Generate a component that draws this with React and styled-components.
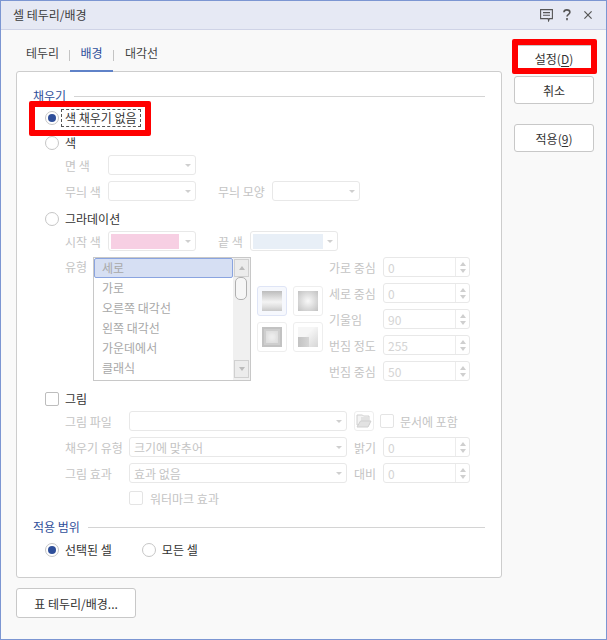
import React from "react";
import styled, { createGlobalStyle } from "styled-components";

const GlobalStyle = createGlobalStyle`
  html, body {
    margin: 0;
    padding: 0;
    background: #f9f9f9;
  }
  body {
    font-family: "Noto Sans CJK KR", "Noto Sans", sans-serif;
    font-size: 12px;
    color: #333;
  }
`;

const muted = "#c4c4c4";

const Window = styled.div`
  box-sizing: border-box;
  width: 607px;
  height: 640px;
  display: flex;
  flex-direction: column;
  border: 1px solid #7c96d2;
  background: #f9f9f9;
  overflow: hidden;
`;

const TitleBar = styled.div`
  box-sizing: border-box;
  height: 29px;
  flex: none;
  display: flex;
  align-items: center;
  justify-content: space-between;
  padding: 0 14px 1px 12px;
  background: #e6e9f4;
  border-bottom: 1px solid #cfd3e6;
  color: #3c3c3c;
`;

const TitleIcons = styled.div`
  display: flex;
  align-items: center;
  gap: 10px;
`;

const Body = styled.div`
  flex: 1;
  display: flex;
  align-items: flex-start;
  padding-left: 15px;
`;

const MainColumn = styled.div`
  width: 486px;
  flex: none;
`;

const Tabs = styled.div`
  height: 42px;
  display: flex;
  align-items: flex-end;
  margin-bottom: -1px;
  position: relative;
`;

const Tab = styled.div`
  box-sizing: border-box;
  width: ${(p) => p.$w}px;
  height: 31px;
  padding-bottom: 7px;
  display: flex;
  align-items: center;
  justify-content: center;
  color: ${(p) => (p.$active ? "#2f4f9a" : "#444")};
  border-bottom: 2px solid ${(p) => (p.$active ? "#5f82c8" : "transparent")};
`;

const TabDivider = styled.div`
  width: 1px;
  height: 11px;
  background: #c4c4c4;
  align-self: flex-end;
  margin-bottom: 11px;
`;

const Panel = styled.div`
  box-sizing: border-box;
  height: 507px;
  padding: 16px 16px 0;
  background: #fff;
  border: 1px solid #cdcdcd;
  border-radius: 3px;
`;

const Heading = styled.div`
  height: 16px;
  margin-top: ${(p) => p.$mt || 0}px;
  display: flex;
  align-items: center;
  gap: 8px;
  color: #2f4f9a;
  line-height: 16px;

  &::after {
    content: "";
    flex: 1;
    height: 1px;
    background: #d4d4d4;
  }
`;

const Row = styled.div`
  height: 20px;
  margin-top: ${(p) => p.$mt || 0}px;
  padding-left: ${(p) => p.$indent || 0}px;
  display: flex;
  align-items: center;
`;

const Label = styled.span`
  flex: none;
  width: ${(p) => (p.$w ? `${p.$w}px` : "auto")};
  margin-left: ${(p) => p.$ml || 0}px;
  color: ${muted};
  white-space: nowrap;
`;

const TypeLabel = styled(Label)`
  line-height: 20px;
`;

const RadioCircle = styled.span`
  box-sizing: border-box;
  flex: none;
  width: 14px;
  height: 14px;
  border-radius: 50%;
  border: 1px solid #c6c6c6;
  background: #fff;
  display: flex;
  align-items: center;
  justify-content: center;

  &::after {
    content: "";
    display: ${(p) => (p.$on ? "block" : "none")};
    width: 8px;
    height: 8px;
    border-radius: 50%;
    background: #2f4f9a;
  }
`;

const Choice = styled.span`
  margin-left: ${(p) => (p.$focus ? 2 : 6)}px;
  margin-right: ${(p) => p.$mr || 0}px;
  color: #333;
  white-space: nowrap;
  padding: ${(p) => (p.$focus ? "0 3px" : "0")};
  border: ${(p) => (p.$focus ? "1px dashed #555" : "0")};
  line-height: ${(p) => (p.$focus ? "16px" : "20px")};
`;

const CheckBox = styled.span`
  box-sizing: border-box;
  flex: none;
  width: 14px;
  height: 14px;
  border-radius: 2px;
  border: 1px solid ${(p) => (p.$dim ? "#e4e4e4" : "#bdbdbd")};
  background: #fff;
  margin-left: ${(p) => p.$ml || 0}px;
`;

const SelectBox = styled.div`
  box-sizing: border-box;
  flex: none;
  width: ${(p) => p.$w}px;
  height: 20px;
  margin-left: ${(p) => p.$ml || 0}px;
  border: 1px solid #e8e8e8;
  border-radius: 3px;
  background: #fff;
  display: flex;
  align-items: center;
  padding: 2px 0 2px 4px;
  color: ${muted};
  white-space: nowrap;

  &::after {
    content: "";
    margin-left: auto;
    margin-right: 4px;
    border-left: 3px solid transparent;
    border-right: 3px solid transparent;
    border-top: 3px solid #cfcfcf;
  }
`;

const Swatch = styled.span`
  width: ${(p) => p.$w}px;
  height: 15px;
  margin-left: -2px;
  background: ${(p) => p.$color};
`;

const SpinBox = styled.div`
  box-sizing: border-box;
  flex: none;
  width: 87px;
  height: 20px;
  margin-left: ${(p) => p.$ml || 0}px;
  border: 1px solid #e8e8e8;
  border-radius: 3px;
  background: #fff;
  display: flex;
  align-items: center;
  color: #d4d4d4;
  padding-left: 4px;
`;

const SpinArrows = styled.div`
  margin-left: auto;
  box-sizing: border-box;
  width: 14px;
  height: 18px;
  border-left: 1px solid #ececec;
  display: flex;
  flex-direction: column;
  align-items: center;
  justify-content: space-around;
  padding: 2px 0;
`;

const Arrow = styled.span`
  border-left: 3px solid transparent;
  border-right: 3px solid transparent;
  border-${(p) => (p.$up ? "bottom" : "top")}: 4px solid ${(p) => p.$color || "#cfcfcf"};
`;

const GradientBlock = styled.div`
  display: flex;
  align-items: flex-start;
  margin-top: 6px;
  padding-left: 32px;
`;

const ListBox = styled.div`
  box-sizing: border-box;
  flex: none;
  width: 158px;
  height: 124px;
  display: flex;
  border: 1px solid #c8c8c8;
  background: #fff;
`;

const ListItems = styled.div`
  flex: 1;
  display: flex;
  flex-direction: column;
`;

const ListItem = styled.div`
  box-sizing: border-box;
  height: 20px;
  flex: none;
  padding-left: 7px;
  line-height: 17px;
  color: #a8a8a8;
  border-radius: 2px;
  border: 1px solid ${(p) => (p.$selected ? "#8aa4e0" : "transparent")};
  background: ${(p) => (p.$selected ? "#d6dff3" : "transparent")};
`;

const ScrollBar = styled.div`
  flex: none;
  width: 17px;
  padding: 1px 1px 2px 1px;
  box-sizing: border-box;
  background: #f0f0f0;
  display: flex;
  flex-direction: column;
  align-items: stretch;
`;

const ScrollButton = styled.div`
  height: 16px;
  flex: none;
  margin-top: ${(p) => (p.$end ? "auto" : "0")};
  border: 1px solid #d0d0d0;
  background: #ececec;
  display: flex;
  align-items: center;
  justify-content: center;
`;

const ScrollThumb = styled.div`
  box-sizing: border-box;
  height: 23px;
  width: 12px;
  margin: 0 0 0 1px;
  border: 1px solid #b0b0b0;
  border-radius: 5px;
  background: #f6f6f6;
`;

const PresetGrid = styled.div`
  flex: none;
  display: grid;
  grid-template-columns: 30px 30px;
  grid-auto-rows: 30px;
  gap: 6px;
  margin: 29px 0 0 6px;
`;

const Preset = styled.div`
  box-sizing: border-box;
  display: flex;
  align-items: center;
  justify-content: center;
  border: 1px solid ${(p) => (p.$active ? "#dfe5f6" : "#eeeeee")};
  border-radius: 3px;
  background: ${(p) => (p.$active ? "#f6f8fd" : "#fff")};
`;

const PresetFill = styled.div`
  width: 20px;
  height: 20px;
  background: ${(p) => p.$fill};
  box-shadow: ${(p) => p.$shade || "none"};
`;

const FileButton = styled(Preset)`
  width: 20px;
  height: 20px;
  margin-left: 7px;
  flex: none;
`;

const SpinColumn = styled.div`
  display: flex;
  flex-direction: column;
  gap: 6px;
  margin-left: 6px;
`;

const SideColumn = styled.div`
  flex: none;
  width: 80px;
  margin-left: 12px;
  padding-top: 15px;
  display: flex;
  flex-direction: column;
`;

const Button = styled.div`
  box-sizing: border-box;
  width: ${(p) => p.$w || 80}px;
  height: ${(p) => p.$h || 28}px;
  margin-top: ${(p) => p.$mt || 0}px;
  display: flex;
  align-items: center;
  justify-content: center;
  border: 1px solid #c8c8c8;
  border-radius: 3px;
  background: #fff;
  color: #333;
  position: relative;
`;

const Key = styled.span`
  text-decoration: underline;
  text-underline-offset: 2px;
`;

const Highlight = styled.div`
  position: absolute;
  left: ${(p) => p.$x}px;
  top: ${(p) => p.$y}px;
  width: ${(p) => p.$w}px;
  height: ${(p) => p.$h}px;
  box-sizing: border-box;
  border: 6px solid #ff0000;
  border-radius: 2px;
  pointer-events: none;
`;

const FootBar = styled.div`
  margin-top: 10px;
`;

function Select({ w, ml, children }) {
  return (
    <SelectBox $w={w} $ml={ml}>
      {children}
    </SelectBox>
  );
}

function Spin({ value, ml }) {
  return (
    <SpinBox $ml={ml}>
      {value}
      <SpinArrows>
        <Arrow $up />
        <Arrow />
      </SpinArrows>
    </SpinBox>
  );
}

const listItems = ["세로", "가로", "오른쪽 대각선", "왼쪽 대각선", "가운데에서", "클래식"];

const presets = [
  {
    fill: "linear-gradient(#bcbcbc, #d8d8d8 28%, #f4f4f4 55%, #dedede 80%, #c8c8c8)",
    active: true,
  },
  { fill: "radial-gradient(circle, #f6f6f6 5%, #dadada 55%, #c4c4c4 95%)" },
  {
    fill: "#f0f0f0",
    shade: "inset 0 0 0 2px #c2c2c2, inset 0 0 0 4px #cecece, inset 0 0 4px 6px #dcdcdc",
  },
  {
    fill: "linear-gradient(to right, #c2c2c2, #d6d6d6) 0 100% / 55% 50% no-repeat, linear-gradient(135deg, #f6f6f6 40%, #d6d6d6)",
  },
];

const spinRows = [
  ["가로 중심", "0"],
  ["세로 중심", "0"],
  ["기울임", "90"],
  ["번짐 정도", "255"],
  ["번짐 중심", "50"],
];

export default function App() {
  return (
    <>
      <GlobalStyle />
      <Window>
        <TitleBar>
          <span>셀 테두리/배경</span>
          <TitleIcons>
            <svg width="13" height="14" viewBox="0 0 13 14" fill="none" stroke="#555" strokeWidth="1.1">
              <path d="M.6 1.6h11.8v9H9.4L8.6 12.8l-.5-2.2H.6z" />
              <path d="M3 4.6h7M3 7.2h7" />
            </svg>
            <svg width="8" height="12" viewBox="0 0 8 12" fill="none" stroke="#555" strokeWidth="1.6">
              <path d="M.9 3.2C1 1.7 2.2.9 3.8.9 5.6.9 6.9 1.9 6.9 3.3 6.9 5.3 4 5.4 4 7.6" />
              <path d="M4 9v2.2" />
            </svg>
            <svg width="8" height="8" viewBox="0 0 8 8" fill="none" stroke="#555" strokeWidth="1.2" style={{ marginLeft: 3 }}>
              <path d="M.4.4l7.2 7.2M7.6.4L.4 7.6" />
            </svg>
          </TitleIcons>
        </TitleBar>
        <Body>
          <MainColumn>
            <Tabs>
              <Tab $w={53}>테두리</Tab>
              <TabDivider />
              <Tab $active $w={43}>
                배경
              </Tab>
              <TabDivider />
              <Tab $w={55}>대각선</Tab>
            </Tabs>
            <Panel>
              <Heading>채우기</Heading>
              <Row $mt={4} $indent={12}>
                <RadioCircle $on />
                <Choice $focus>색 채우기 없음</Choice>
              </Row>
              <Row $mt={5} $indent={12}>
                <RadioCircle />
                <Choice>색</Choice>
              </Row>
              <Row $mt={2} $indent={32}>
                <Label $w={43}>면 색</Label>
                <Select w={88} />
              </Row>
              <Row $mt={6} $indent={32}>
                <Label $w={43}>무늬 색</Label>
                <Select w={88} />
                <Label $w={54} $ml={22}>
                  무늬 모양
                </Label>
                <Select w={88} />
              </Row>
              <Row $mt={8} $indent={12}>
                <RadioCircle />
                <Choice>그라데이션</Choice>
              </Row>
              <Row $mt={2} $indent={32}>
                <Label $w={43}>시작 색</Label>
                <Select w={88}>
                  <Swatch $w={68} $color="#f7cfe3" />
                </Select>
                <Label $w={32} $ml={22}>
                  끝 색
                </Label>
                <Select w={88}>
                  <Swatch $w={70} $color="#e8eff7" />
                </Select>
              </Row>
              <GradientBlock>
                <TypeLabel $w={28}>유형</TypeLabel>
                <ListBox>
                  <ListItems>
                    {listItems.map((item, i) => (
                      <ListItem key={item} $selected={i === 0}>
                        {item}
                      </ListItem>
                    ))}
                  </ListItems>
                  <ScrollBar>
                    <ScrollButton>
                      <Arrow $up $color="#bbb" />
                    </ScrollButton>
                    <ScrollThumb />
                    <ScrollButton $end>
                      <Arrow $color="#bbb" />
                    </ScrollButton>
                  </ScrollBar>
                </ListBox>
                <PresetGrid>
                  {presets.map((p, i) => (
                    <Preset key={i} $active={p.active}>
                      <PresetFill $fill={p.fill} $shade={p.shade} />
                    </Preset>
                  ))}
                </PresetGrid>
                <SpinColumn>
                  {spinRows.map(([label, value]) => (
                    <Row key={label}>
                      <Label $w={54}>{label}</Label>
                      <Spin value={value} />
                    </Row>
                  ))}
                </SpinColumn>
              </GradientBlock>
              <Row $mt={8} $indent={12}>
                <CheckBox />
                <Choice>그림</Choice>
              </Row>
              <Row $mt={2} $indent={32}>
                <Label $w={64}>그림 파일</Label>
                <Select w={218} />
                <FileButton>
                  <svg width="16" height="14" viewBox="0 0 16 14">
                    <path d="M1 1h5.5l1 1H13v9H1z" fill="#f4f4f4" stroke="#d0d0d0" />
                    <path d="M5 3h7v4H5z" fill="#e2e2e2" />
                    <path d="M1 13l3.5-6H15l-3 6z" fill="#e2e2e2" stroke="#d0d0d0" />
                  </svg>
                </FileButton>
                <CheckBox $dim $ml={6} />
                <Label $ml={6}>문서에 포함</Label>
              </Row>
              <Row $mt={6} $indent={32}>
                <Label $w={64}>채우기 유형</Label>
                <Select w={218}>크기에 맞추어</Select>
                <Label $w={29} $ml={7}>
                  밝기
                </Label>
                <Spin value="0" />
              </Row>
              <Row $mt={6} $indent={32}>
                <Label $w={64}>그림 효과</Label>
                <Select w={218}>효과 없음</Select>
                <Label $w={29} $ml={7}>
                  대비
                </Label>
                <Spin value="0" />
              </Row>
              <Row $mt={5} $indent={96}>
                <CheckBox $dim />
                <Label $ml={7}>워터마크 효과</Label>
              </Row>
              <Heading $mt={11}>적용 범위</Heading>
              <Row $mt={5} $indent={12}>
                <RadioCircle $on />
                <Choice $mr={30}>선택된 셀</Choice>
                <RadioCircle />
                <Choice>모든 셀</Choice>
              </Row>
            </Panel>
            <FootBar>
              <Button $w={120} $h={30}>
                표 테두리/배경...
              </Button>
            </FootBar>
          </MainColumn>
          <SideColumn>
            <Button $h={26}>
              설정(<Key>D</Key>)
              <Highlight $x={-3} $y={-7} $w={85} $h={35} />
            </Button>
            <Button $mt={5}>취소</Button>
            <Button $mt={20}>
              적용(<Key>9</Key>)
            </Button>
          </SideColumn>
        </Body>
        <Highlight $x={29} $y={101} $w={122} $h={35} />
      </Window>
    </>
  );
}
